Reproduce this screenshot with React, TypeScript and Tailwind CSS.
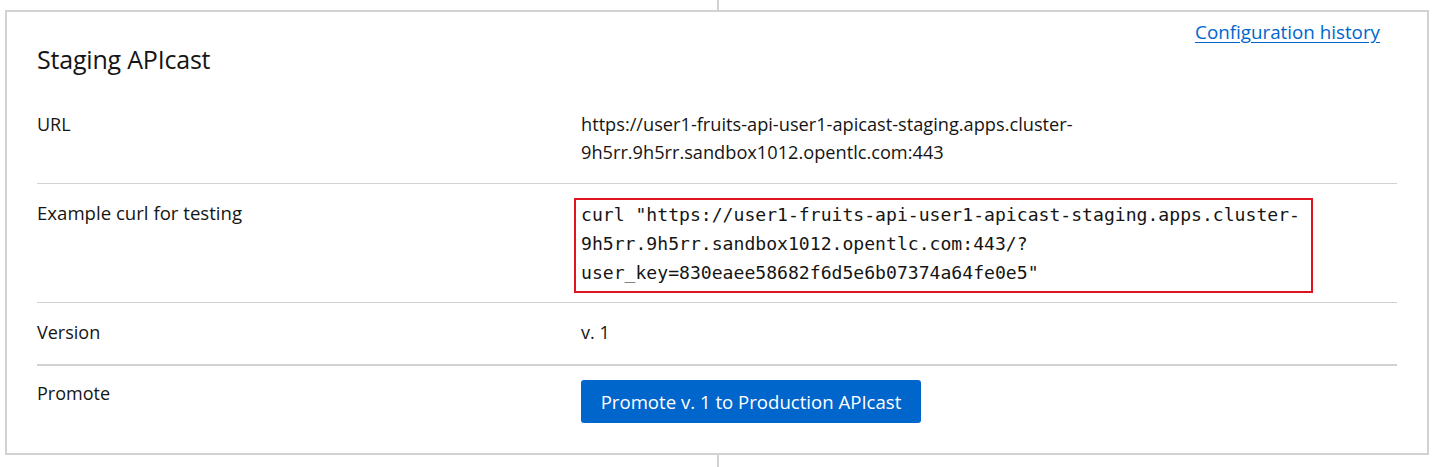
import React from "react";

const body = { fontFamily: '"Open Sans", "Liberation Sans", sans-serif' };
const mono = { fontFamily: '"DejaVu Sans Mono", "Liberation Mono", monospace' };

export default function App() {
  return (
    <div className="w-[1435px] h-[467px] bg-white text-[#151515]" style={body}>
      {/* stub of the split layout behind */}
      <div className="w-[2px] h-[10px] mx-auto bg-[#d2d2d2]" />

      {/* Card */}
      <div className="ml-[5px] mr-[6px] border-2 border-[#d2d2d2] px-[30px] pb-[30px]">
        <div className="flex justify-between items-start">
          <h2 className="mt-[32px] text-[25px] leading-[30px] font-normal tracking-[-0.2px]">Staging APIcast</h2>
          <a
            href="#"
            className="mt-[8px] mr-[17px] text-[18.8px] leading-[24px] text-[#0066cc] underline underline-offset-[3px]"
          >
            Configuration history
          </a>
        </div>

        <div className="mt-[19px] text-[18px] leading-[28px]">
          {/* URL */}
          <div className="grid grid-cols-[544px_1fr] pt-[17px] pb-[17px] border-b border-[#d2d2d2]">
            <div>URL</div>
            <div className="text-[18.2px]">
              https://user1-fruits-api-user1-apicast-staging.apps.cluster-
              <br />
              9h5rr.9h5rr.sandbox1012.opentlc.com:443
            </div>
          </div>

          {/* Example curl */}
          <div className="grid grid-cols-[544px_1fr] pt-[14px] pb-[9px] border-b border-[#d2d2d2]">
            <div className="pt-[1px] text-[18.6px]">Example curl for testing</div>
            <div>
              <div
                className="-ml-[7px] w-[739px] border-2 border-[#e0141e] px-[5px] pb-[4px] text-[18.1px] leading-[29px]"
                style={mono}
              >
                <div>curl "https://user1-fruits-api-user1-apicast-staging.apps.cluster-</div>
                <div>9h5rr.9h5rr.sandbox1012.opentlc.com:443/?</div>
                <div>user_key=830eaee58682f6d5e6b07374a64fe0e5"</div>
              </div>
            </div>
          </div>

          {/* Version */}
          <div className="grid grid-cols-[544px_1fr] pt-[15px] pb-[18px] border-b-2 border-[#d2d2d2]">
            <div>Version</div>
            <div>v. 1</div>
          </div>

          {/* Promote */}
          <div className="grid grid-cols-[544px_1fr] pt-[13px]">
            <div>Promote</div>
            <div className="pt-[1px]">
              <button className="w-[340px] h-[43px] rounded-[3px] bg-[#0066cc] text-white text-[18.6px] leading-[24px]">
                Promote v. 1 to Production APIcast
              </button>
            </div>
          </div>
        </div>
      </div>

      <div className="w-[2px] h-[12px] mx-auto bg-[#d2d2d2]" />
    </div>
  );
}
